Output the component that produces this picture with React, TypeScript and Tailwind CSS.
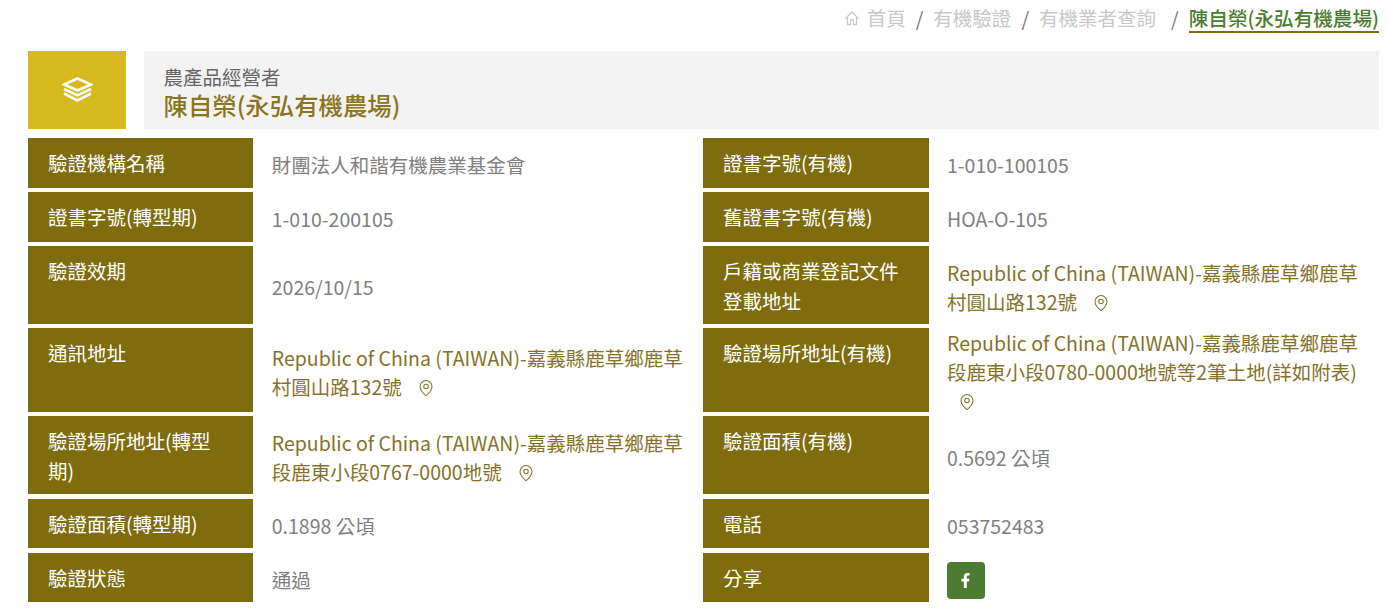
import { MapPin } from "lucide-react";
import type { ReactNode } from "react";

function Label({ children }: { children: ReactNode }) {
  return (
    <div className="bg-[#7f6c0e] px-5 pt-[10px] text-[19.5px] leading-[30px] text-white">
      {children}
    </div>
  );
}

function Value({ children, left = false }: { children: ReactNode; left?: boolean }) {
  return (
    <div className={`flex items-center pr-[14px] pt-[4.5px] text-[19.5px] leading-[29.5px] text-[#808080] ${left ? "pl-[18.6px]" : "pl-[18px]"}`}>
      <div>{children}</div>
    </div>
  );
}

function Address({ text }: { text: string }) {
  return (
    <span className="text-[#857228]">
      {text}{" "}
      <MapPin className="ml-[11px] inline-block h-[18px] w-[18px] -translate-y-[2px]" strokeWidth={1.4} />
    </span>
  );
}

export default function App() {
  return (
    <div className="h-[615px] overflow-hidden bg-white pl-[28px] pr-[10px] font-['Noto_Sans_CJK_TC','Noto_Sans',sans-serif]">
      <nav className="flex h-[51px] items-start justify-end pt-[4px] text-[19.5px] leading-[27px] text-[#c8c8c8]">
        <svg viewBox="0 0 16 16" className="mr-[7px] mt-[6px] h-[16px] w-[16px] fill-none stroke-[#c8c8c8] stroke-[1.3]">
          <path d="M1.5 8.5 8 2l6.5 6.5" />
          <path d="M3.5 7v7.5h3V11a1.5 1.5 0 0 1 3 0v3.5h3V7" />
        </svg>
        <span>首頁</span>
        <span className="mx-[10px] text-[#777777]">/</span>
        <span>有機驗證</span>
        <span className="mx-[10px] text-[#777777]">/</span>
        <span>有機業者查詢</span>
        <span className="ml-[15px] mr-[10px] text-[#777777]">/</span>
        <span className="border-b-2 border-[#7f6c0e] text-[19.6px] font-medium text-[#4a7c2f]">陳自榮(永弘有機農場)</span>
      </nav>

      <header className="flex h-[78px] gap-[18px]">
        <div className="flex w-[98px] items-center justify-center bg-[#d6b81f]">
          <svg viewBox="0 0 31 25" className="h-[25px] w-[31px] -translate-y-[1px] fill-none stroke-white stroke-[2.6]">
            <path d="M15.5 1.5 29 7.5l-13.5 6L2 7.5z" />
            <path d="M2 12l13.5 6.4L29 12" />
            <path d="M2 16.5l13.5 7L29 16.5" />
          </svg>
        </div>
        <div className="flex-1 bg-[#f3f3f3] pl-[19.5px] pt-[12px]">
          <div className="text-[19.5px] leading-[27px] text-[#666666]">農產品經營者</div>
          <div className="text-[24.4px] leading-[30px] font-medium text-[#8a7520]">陳自榮(永弘有機農場)</div>
        </div>
      </header>

      <div className="mt-[9px] grid grid-cols-[225.2px_449.8px_226px_450px] grid-rows-[49.5px_49.5px_77.5px_83.5px_78px_49.5px_49.5px] gap-y-[4.5px]">
        <Label>驗證機構名稱</Label>
        <Value left>財團法人和諧有機農業基金會</Value>
        <Label>證書字號(有機)</Label>
        <Value>1-010-100105</Value>

        <Label>證書字號(轉型期)</Label>
        <Value left>1-010-200105</Value>
        <Label>舊證書字號(有機)</Label>
        <Value>HOA-O-105</Value>

        <Label>驗證效期</Label>
        <Value left>2026/10/15</Value>
        <Label>戶籍或商業登記文件登載地址</Label>
        <Value><Address text="Republic of China (TAIWAN)-嘉義縣鹿草鄉鹿草村圓山路132號" /></Value>

        <Label>通訊地址</Label>
        <Value left><Address text="Republic of China (TAIWAN)-嘉義縣鹿草鄉鹿草村圓山路132號" /></Value>
        <Label>驗證場所地址(有機)</Label>
        <Value><Address text="Republic of China (TAIWAN)-嘉義縣鹿草鄉鹿草段鹿東小段0780-0000地號等2筆土地(詳如附表)" /></Value>

        <Label>驗證場所地址(轉型期)</Label>
        <Value left><Address text="Republic of China (TAIWAN)-嘉義縣鹿草鄉鹿草段鹿東小段0767-0000地號" /></Value>
        <Label>驗證面積(有機)</Label>
        <Value>0.5692 公頃</Value>

        <Label>驗證面積(轉型期)</Label>
        <Value left>0.1898 公頃</Value>
        <Label>電話</Label>
        <Value>053752483</Value>

        <Label>驗證狀態</Label>
        <Value left>通過</Value>
        <Label>分享</Label>
        <Value>
          <div className="flex h-[37px] w-[38px] translate-y-[1px] items-center justify-center rounded-[4px] bg-[#4c7c33]">
            <svg viewBox="0 0 320 512" className="h-[15px] w-[15px] fill-white">
              <path d="M279 288l14-93h-89v-60c0-25 12-50 52-50h41V6s-37-6-72-6c-73 0-121 45-121 125v70H23v93h81v224h100V288z" />
            </svg>
          </div>
        </Value>
      </div>
    </div>
  );
}
